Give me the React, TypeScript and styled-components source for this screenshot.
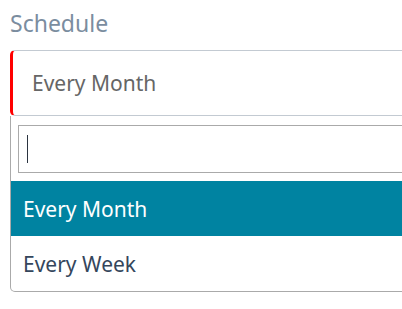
import React from "react";
import styled, { createGlobalStyle } from "styled-components";

const Global = createGlobalStyle`
  html, body { margin: 0; padding: 0; background: #fff; overflow: hidden; }
  body { font-family: "Noto Sans", "Open Sans", sans-serif; }
`;

const Page = styled.div`
  padding: 8px 0 0 10px;
  width: 440px;
`;

const Label = styled.div`
  font-size: 23px;
  line-height: 30px;
  color: #7b8d9f;
  height: 30px;
  margin-bottom: 12px;
`;

const Select = styled.div`
  box-sizing: border-box;
  height: 66px;
  display: flex;
  align-items: center;
  padding-left: 19px;
  border: 1px solid #c3cad2;
  border-left: 3px solid #ff0000;
  border-radius: 5px;
  font-size: 21px;
  color: #666;
`;

const Dropdown = styled.div`
  border: 1px solid #aaa;
  border-top: none;
  border-radius: 0 0 5px 5px;
  display: flex;
  flex-direction: column;
`;

const SearchWrap = styled.div`
  padding: 9px 7px 8px 7px;
`;

const SearchBox = styled.div`
  box-sizing: border-box;
  height: 48px;
  border: 1px solid #aaa;
  display: flex;
  align-items: center;
  padding-left: 8px;
`;

const Caret = styled.span`
  width: 1px;
  height: 28px;
  background: #2b3440;
`;

const Option = styled.div<{ $active?: boolean }>`
  height: 55px;
  display: flex;
  align-items: center;
  padding-left: 12px;
  font-size: 21px;
  background: ${(p) => (p.$active ? "#0083a1" : "transparent")};
  color: ${(p) => (p.$active ? "#fff" : "#34465c")};
`;

export default function App() {
  return (
    <>
      <Global />
      <Page>
        <Label>Schedule</Label>
        <Select>Every Month</Select>
        <Dropdown>
          <SearchWrap>
            <SearchBox>
              <Caret />
            </SearchBox>
          </SearchWrap>
          <Option $active>Every Month</Option>
          <Option>Every Week</Option>
        </Dropdown>
      </Page>
    </>
  );
}
